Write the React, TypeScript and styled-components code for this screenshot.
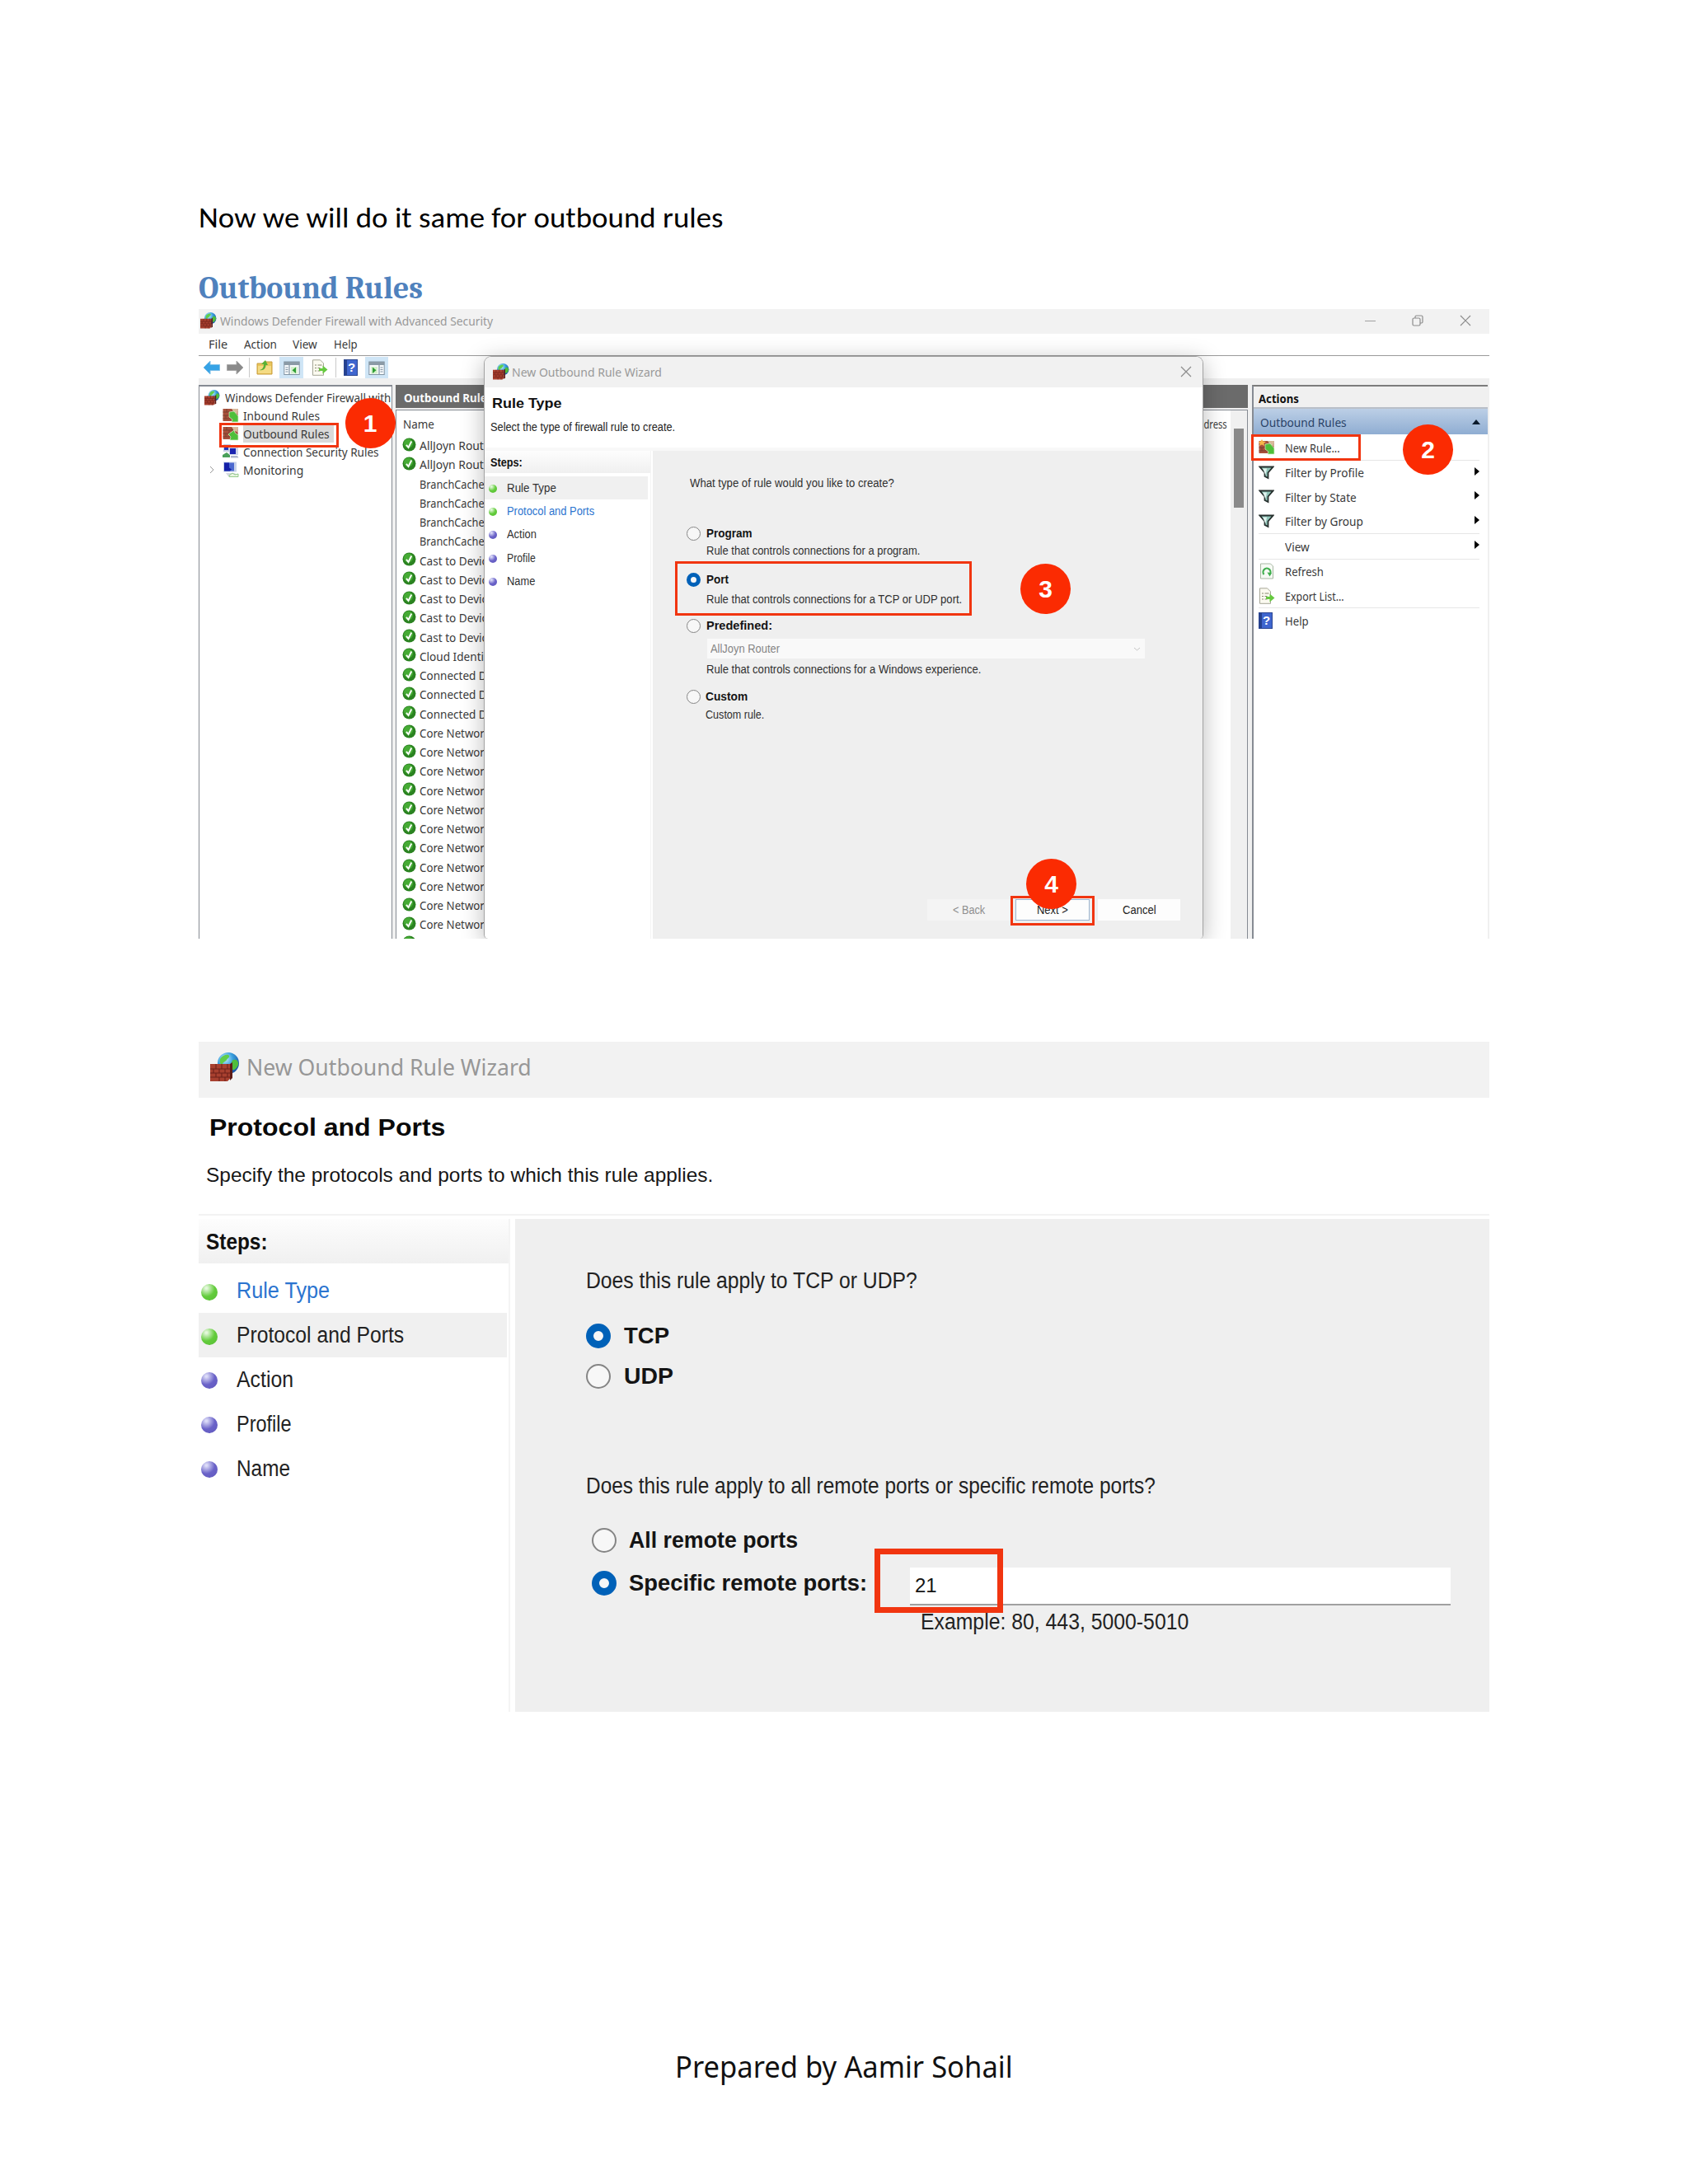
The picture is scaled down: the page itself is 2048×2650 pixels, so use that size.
import React, { useLayoutEffect, useRef, useState } from 'react';
import styled, { createGlobalStyle } from 'styled-components';

const segoe = `'Noto Sans', 'Open Sans', sans-serif`;
const arial = `'Liberation Sans', Arial, sans-serif`;

const GlobalStyle = createGlobalStyle`
  * {
    box-sizing: border-box;
  }
  body {
    margin: 0;
    background: #ffffff;
  }
`;

const Page = styled.main`
  width: 2048px;
  height: 2650px;
  padding: 245px 241px 0;
  background: #ffffff;
  display: flex;
  flex-direction: column;
`;

const Intro = styled.p`
  margin: 0 0 47px;
  height: 40px;
  line-height: 40px;
  font-family: Carlito, Lato, sans-serif;
  font-size: 34px;
  color: #000000;
`;

const Heading = styled.h2`
  margin: 0 0 6px;
  height: 37px;
  line-height: 37px;
  font-family: Caladea, Cambria, 'Liberation Serif', serif;
  font-size: 38px;
  font-weight: 700;
  color: #4f81bd;
`;

const Footer = styled.footer`
  margin-top: 405px;
  height: 50px;
  display: flex;
  align-items: center;
  justify-content: center;
  font-family: ${segoe};
  font-size: 36px;
  color: #111111;
`;

/* text that is squeezed or stretched to a known width */
const FitBox = styled.span<{ $width: number }>`
  display: block;
  flex: none;
  width: ${props => props.$width}px;
  white-space: nowrap;
`;

const FitInner = styled.span`
  display: inline-block;
  transform-origin: 0 50%;
`;

const Fit: React.FC<{ width: number; children: string }> = ({ width, children }) => {
  const ref = useRef<HTMLSpanElement>(null);
  const [scale, setScale] = useState(1);

  useLayoutEffect(() => {
    if (ref.current) {
      setScale(width / ref.current.offsetWidth);
    }
  }, [width, children]);

  return (
    <FitBox $width={width}>
      <FitInner ref={ref} style={{ transform: `scaleX(${scale})` }}>
        {children}
      </FitInner>
    </FitBox>
  );
};

/* ---------- icons ---------- */

const Icon = styled.svg<{ $size: number }>`
  display: block;
  flex: none;
  width: ${props => props.$size}px;
  height: ${props => props.$size}px;
`;

const FirewallIcon = ({ size }: { size: number }) => (
  <Icon $size={size} viewBox="0 0 36 36">
    <defs>
      <radialGradient id="globe" cx="0.35" cy="0.3" r="0.8">
        <stop offset="0" stopColor="#c9f1ff" />
        <stop offset="0.45" stopColor="#3aa0dd" />
        <stop offset="1" stopColor="#12479b" />
      </radialGradient>
    </defs>
    <circle cx="22" cy="13" r="13" fill="url(#globe)" />
    <path d="M12 8c4-6 10-6 11-4s-2 3-3 5-4 2-5 5-4-1-3-6z" fill="#5fce4a" />
    <path d="M28 9c3-1 5 0 6 3s-2 8-5 9-2-3-3-5 0-6 2-7z" fill="#4fbd3c" />
    <path d="M0 14h24v18l-3 3H0z" fill="#a8402f" />
    <path d="M24 14l3-2v19l-3 3z" fill="#5e1b16" />
    <path
      d="M0 20h24M0 25h24M0 30h24M7 14v6M14 14v6M21 14v6M4 20v5M11 20v5M18 20v5M7 25v5M14 25v5M21 25v5M11 30v5M18 30v5"
      stroke="#6d211a"
      strokeWidth="1.1"
      fill="none"
    />
  </Icon>
);

const RuleIcon = ({ size, flip, star }: { size: number; flip?: boolean; star?: boolean }) => (
  <Icon $size={size} viewBox="0 0 20 20">
    <rect x="0.5" y="2" width="18" height="15" fill="#a8503c" />
    <path d="M0.5 6h18M0.5 10h18M0.5 14h18M5 2v4M12 2v4M8 6v4M4 10v4M11 10v4" stroke="#74402c" strokeWidth="0.9" />
    <path d="M11 2h7.5v6L14 7z" fill="#d9b99a" />
    {flip ? (
      <path d="M19 18H9l1-4-3-3 7-5 1 3 4 3z" fill="#4fbf3a" stroke="#ddf2d0" strokeWidth="0.7" />
    ) : (
      <path d="M8 6l6-1 5 6v7h-8l1-3-4-3z" fill="#4fbf3a" stroke="#ddf2d0" strokeWidth="0.7" />
    )}
    {star && <path d="M4 0l1.5 2.5L9 3 6.5 5 7 8 4 6.5 1 8l.5-3L0 3l2.5-.5z" fill="#f7b64b" />}
  </Icon>
);

const SecurityIcon = ({ size }: { size: number }) => (
  <Icon $size={size} viewBox="0 0 20 20">
    <rect x="1" y="1" width="9" height="9" fill="#c5cde6" />
    <rect x="2" y="2" width="5" height="6" fill="#2336b8" />
    <path d="M0 14l5-3 4 3v3H0z" fill="#4aa05a" />
    <rect x="8" y="5" width="11" height="9" fill="#cdd4ea" />
    <rect x="9" y="6" width="7" height="7" fill="#1a23b0" />
    <path d="M10 15h8l1.5 2.5H10z" fill="#aeb6cc" />
  </Icon>
);

const MonitorIcon = ({ size }: { size: number }) => (
  <Icon $size={size} viewBox="0 0 20 20">
    <rect x="1" y="0.5" width="16" height="12" fill="#c8d2ea" />
    <rect x="2" y="1.5" width="12" height="10" fill="#4b68cf" />
    <path d="M2 1.5h6v6l3 2-2 2H2z" fill="#1420a8" />
    <path d="M4 14h11l3 4H7z" fill="#d3d8e0" />
    <path d="M8 17l4-3 3 2 4-1v3.5H8z" fill="#e8f5e0" stroke="#7dbf72" strokeWidth="0.8" />
  </Icon>
);

const CheckIcon = () => (
  <Icon $size={17} viewBox="0 0 17 17">
    <circle cx="8.5" cy="8.5" r="8" fill="#2b8321" />
    <circle cx="7.5" cy="7" r="5.500" fill="#46ab35" />
    <path d="M5 8.800l2.500 3.200 3.800-7.500" stroke="#ffffff" strokeWidth="1.900" fill="none" />
  </Icon>
);

const FunnelIcon = () => (
  <Icon $size={19} viewBox="0 0 19 19">
    <path d="M1.500 2.500h16l-6 7v6.500l-4-2V9.500z" fill="#8fc4b8" stroke="#26302e" strokeWidth="1.800" />
    <path d="M5 4.500h5l-1.500 8z" fill="#dff3ee" />
  </Icon>
);

const RefreshIcon = () => (
  <Icon $size={20} viewBox="0 0 20 20">
    <path d="M2.500 1h12l3 3v15h-15z" fill="#f6faf4" stroke="#a9b8a4" />
    <path d="M6.500 14a4.500 4.500 0 1 1 7 0" stroke="#3fae4d" strokeWidth="2.200" fill="none" />
    <path d="M10.500 11.500l5.500.5-2.500 4.500z" fill="#3fae4d" />
  </Icon>
);

const ExportIcon = () => (
  <Icon $size={20} viewBox="0 0 20 20">
    <path d="M1.500 0.800h9l4 4v14.500h-13z" fill="#fbfaf0" stroke="#a5a696" />
    <path d="M4 7h2M7.500 7h5M4 10.500h2M7.500 10.500h3M4 14h2M7.500 14h3" stroke="#87886f" strokeWidth="1.200" />
    <path d="M9 11h4.500V7.500l6 5-6 5V14H9z" fill="#66c93f" />
  </Icon>
);

const QuestionMark = styled.span`
  display: block;
  flex: none;
  width: 17px;
  height: 20px;
  background: linear-gradient(90deg, #25418f 0 3px, #3f66cf 3px);
  border: 1px solid #2a4591;
  color: #ffffff;
  font: 700 15px/18px ${arial};
  text-align: center;
  padding-left: 2px;
`;

const FolderUpIcon = () => (
  <Icon $size={20} viewBox="0 0 20 20">
    <path d="M1 5h7l1.500-2H19v15H1z" fill="#e9c65c" stroke="#c99c3a" />
    <path d="M2 8h16v9H2z" fill="#f4db84" />
    <path d="M4 13c4-1 5-4 5-7H6l5-5 3 6h-2.500c0 4-3 7-7.500 6z" fill="#58b135" />
  </Icon>
);

const PaneIcon = ({ flip }: { flip?: boolean }) => (
  <Icon $size={20} viewBox="0 0 20 20">
    <g transform={flip ? 'matrix(-1 0 0 1 20 0)' : undefined}>
      <rect x="0.8" y="3" width="18.4" height="15.500" fill="#f7fafc" stroke="#8294a3" />
      <rect x="0.8" y="3" width="18.4" height="4" fill="#8b9aa6" />
      <path d="M7 7v11M2.500 10h3M2.500 12.500h3M2.500 15h3" stroke="#8294a3" strokeWidth="1.200" />
      <rect x="9" y="9" width="8" height="8.500" fill="#d6f0cd" />
      <path d="M15 9.500l-4.500 3.800 4.500 3.800z" fill="#2f9e35" />
    </g>
  </Icon>
);

const ArrowIcon = ({ color, edge, flip }: { color: string; edge: string; flip?: boolean }) => (
  <Icon $size={20} viewBox="0 0 20 20">
    <path
      d={flip ? 'M20 10l-8-8v4.500H0.500v7H12V18z' : 'M0 10l8-8v4.500h11.500v7H8V18z'}
      fill={color}
      stroke={edge}
      strokeWidth="1"
    />
  </Icon>
);

const CloseIcon = () => (
  <Icon $size={14} viewBox="0 0 14 14">
    <path d="M1 1l12 12M13 1L1 13" stroke="#8c8c8c" strokeWidth="1.200" />
  </Icon>
);

/* ---------- annotations ---------- */

const Marker = styled.div<{ $x: number; $y: number }>`
  position: absolute;
  left: ${props => props.$x}px;
  top: ${props => props.$y}px;
  width: 61px;
  height: 61px;
  border-radius: 50%;
  background: #fb2b02;
  color: #ffffff;
  font: 700 30px/61px ${arial};
  text-align: center;
  z-index: 3;
`;

const Highlight = styled.div<{ $x: number; $y: number; $w: number; $h: number; $line?: number }>`
  position: absolute;
  left: ${props => props.$x}px;
  top: ${props => props.$y}px;
  width: ${props => props.$w}px;
  height: ${props => props.$h}px;
  border: ${props => props.$line ?? 3}px solid #f13510;
  z-index: 2;
`;

/* ---------- firewall console ---------- */

const Console = styled.section`
  position: relative;
  width: 1566px;
  height: 764px;
  overflow: hidden;
  flex: none;
  display: flex;
  flex-direction: column;
  background: #f0f0f0;
  font-family: ${segoe};
  font-size: 14.5px;
  color: #3a3a3a;
`;

const TitleBar = styled.div`
  height: 30px;
  flex: none;
  display: flex;
  align-items: center;
  gap: 4px;
  padding: 0 22px 2px 2px;
  background: #f2f2f2;
  color: #999999;
`;

const WindowControls = styled.div`
  margin-left: auto;
  display: flex;
  align-items: center;
  gap: 44px;
`;

const MenuBar = styled.div`
  height: 27px;
  flex: none;
  display: flex;
  align-items: center;
  gap: 19.5px;
  padding: 0 0 2px 12px;
  background: #ffffff;
  border-bottom: 1px solid #9a9a9a;
`;

const Toolbar = styled.div`
  height: 27px;
  flex: none;
  display: flex;
  align-items: center;
  padding: 1px 0 0 6px;
  background: #ffffff;
  margin-bottom: 8px;
`;

const ToolSlot = styled.div<{ $width: number; $active?: boolean }>`
  width: ${props => props.$width}px;
  height: 26px;
  display: flex;
  align-items: center;
  justify-content: center;
  background: ${props => (props.$active ? '#cfe5f6' : 'transparent')};
`;

const ToolDivider = styled.div`
  width: 1px;
  height: 24px;
  background: #c9c9c9;
`;

const Workspace = styled.div`
  flex: 1;
  min-height: 0;
  display: flex;
`;

const TreePane = styled.div`
  position: relative;
  width: 235px;
  margin-right: 4px;
  padding: 2px 0 0 6px;
  background: #ffffff;
  border: 1px solid #868b93;
  border-top-width: 2px;
  border-bottom: 0;
`;

const TreeRow = styled.div<{ $root?: boolean }>`
  height: 22px;
  display: flex;
  align-items: center;
  gap: ${props => (props.$root ? 6 : 5)}px;
  padding-left: ${props => (props.$root ? 0 : 22)}px;
  overflow: hidden;
`;

const TreeLabel = styled.span<{ $selected?: boolean }>`
  height: 21px;
  line-height: 20px;
  padding-right: 5px;
  background: ${props => (props.$selected ? '#d9d9d9' : 'transparent')};
`;

const Expander = styled.svg`
  width: 8px;
  height: 10px;
  margin: 0 4px 0 -17px;
`;

const ListPane = styled.div`
  width: 1034px;
  margin-right: 5px;
  display: flex;
  flex-direction: column;
`;

const ListTitle = styled.div`
  height: 28px;
  flex: none;
  padding: 2px 10px 0;
  display: flex;
  align-items: center;
  background: #6b6b6b;
  color: #ffffff;
  font-weight: 700;
  margin-bottom: 2px;
`;

const ListBody = styled.div`
  position: relative;
  flex: 1;
  min-height: 0;
  overflow: hidden;
  background: #ffffff;
  border: 1px solid #868b93;
  border-bottom: 0;
`;

const ListHead = styled.div`
  height: 30.5px;
  display: flex;
  align-items: center;
  justify-content: space-between;
  padding: 2px 24px 0 8px;
`;

const RuleRow = styled.div`
  height: 23.25px;
  display: flex;
  align-items: center;
  gap: 4px;
  padding-left: 7px;
`;

const RuleIconSlot = styled.span`
  width: 17px;
  padding-bottom: 2px;
`;

const ScrollTrack = styled.div`
  position: absolute;
  top: 0;
  right: 0;
  width: 20px;
  height: 100%;
  padding: 22px 4px 0;
  background: #f0f0f0;
`;

const ScrollThumb = styled.div`
  height: 96px;
  background: #8a8a8a;
`;

const ActionsPane = styled.div`
  position: relative;
  width: 286px;
  background: #ffffff;
  border-left: 2px solid #868b93;
  border-top: 2px solid #7c7c7c;
`;

const ActionsTitle = styled.div`
  height: 27px;
  padding: 4px 0 0 6px;
  background: #f0f0f0;
  border-bottom: 2px solid #b9bfc8;
  color: #111111;
  font-weight: 700;
  line-height: 20px;
`;

const ActionsGroup = styled.div`
  height: 31px;
  padding: 1px 9px 0 8px;
  display: flex;
  align-items: center;
  justify-content: space-between;
  background: linear-gradient(#bccfe6, #8fadd2);
  color: #2a4368;
`;

const ActionRow = styled.div<{ $height: number; $ruled?: boolean }>`
  height: ${props => props.$height}px;
  margin: 0 10px 0 6px;
  display: flex;
  align-items: center;
  border-bottom: 1px solid ${props => (props.$ruled ? '#e6e6e6' : 'transparent')};
`;

const ActionIconSlot = styled.span`
  width: 32px;
`;

const Submenu = styled.span`
  margin-left: auto;
  margin-bottom: 3px;
  border: solid transparent;
  border-width: 5.5px 0 5.5px 6px;
  border-left-color: #000000;
`;

const Collapse = styled.span`
  border: solid transparent;
  border-width: 0 5.5px 6px;
  border-bottom-color: #0b1a2c;
`;

/* ---------- wizard dialogs ---------- */

const Dialog = styled.div`
  position: absolute;
  left: 346px;
  top: 57px;
  width: 873px;
  height: 707px;
  display: flex;
  flex-direction: column;
  background: #ffffff;
  border: 1px solid #a2a2a2;
  border-bottom: 0;
  border-radius: 9px 9px 5px 5px;
  box-shadow: 0 6px 28px rgba(0, 0, 0, 0.28);
  overflow: hidden;
  font-family: ${arial};
  font-size: 14px;
  color: #303030;
`;

const DialogTitle = styled.div`
  height: 37px;
  flex: none;
  display: flex;
  align-items: center;
  gap: 3px;
  padding: 0 13px 2px 10px;
  background: #f1f1f1;
  color: #999999;
  font-family: ${segoe};
  font-size: 15px;

  svg:last-child {
    margin-left: auto;
  }
`;

const DialogHeader = styled.div`
  height: 77px;
  flex: none;
  padding: 9px 0 0 7px;
  line-height: 18px;
  color: #222222;
  border-bottom: 4px solid #f8f8f8;
`;

const DialogHeading = styled.div`
  padding-left: 2px;
  margin-bottom: 10px;
  font-size: 16.5px;
  font-weight: 700;
  line-height: 20px;
  color: #111111;
`;

const WizardBody = styled.div`
  flex: 1;
  min-height: 0;
  display: flex;
`;

const StepsPane = styled.div<{ $large?: boolean }>`
  width: ${props => (props.$large ? 378 : 202)}px;
  margin-right: ${props => (props.$large ? 6 : 2)}px;
  flex: none;
  border-right: ${props => (props.$large ? '2px' : '1px')} solid #f4f4f4;
`;

const StepsTitle = styled.div<{ $large?: boolean }>`
  height: ${props => (props.$large ? 54 : 27)}px;
  margin-bottom: ${props => (props.$large ? 6 : 4)}px;
  padding: ${props => (props.$large ? '2px 0 0 9px' : '1px 0 0 7px')};
  display: flex;
  align-items: center;
  background: linear-gradient(#fdfdfd, #f0f0f0);
  font-weight: 700;
  color: #111111;
`;

const StepRow = styled.div<{ $large?: boolean; $current?: boolean; $link?: boolean }>`
  height: ${props => (props.$large ? 53.8 : 28.2)}px;
  margin-right: ${props => (props.$large ? 2 : 3)}px;
  padding: ${props => (props.$large ? '2px 0 0 3px' : '0 0 0 5px')};
  display: flex;
  align-items: center;
  gap: ${props => (props.$large ? 22.5 : 11.5)}px;
  background: ${props => (props.$current ? '#f0f0f0' : 'transparent')};
  color: ${props => (props.$link ? '#2b74cf' : 'inherit')};
`;

const Bullet = styled.span<{ $large?: boolean; $done?: boolean }>`
  flex: none;
  width: ${props => (props.$large ? 20 : 10)}px;
  height: ${props => (props.$large ? 20 : 10)}px;
  margin-top: 2px;
  border-radius: 50%;
  background: ${props =>
    props.$done
      ? 'radial-gradient(circle at 32% 25%, #e4f8dc 5%, #63cc3c 50%, #57bd35)'
      : 'radial-gradient(circle at 32% 25%, #dcdcf8 5%, #6a62c8 50%, #5f58bd)'};
`;

const WizardMain = styled.div`
  position: relative;
  flex: 1;
  padding-left: 1px;
  display: flex;
  flex-direction: column;
  background: #efefef;
`;

const Line = styled.div<{ $top: number; $left: number; $height?: number }>`
  height: ${props => props.$height ?? 20}px;
  flex: none;
  margin: ${props => props.$top}px 0 0 ${props => props.$left}px;
  display: flex;
  align-items: center;
`;

const OptionLine = styled(Line)`
  font-weight: 700;
  color: #141414;
`;

const Radio = styled.span<{ $size: number; $gap: number; $checked?: boolean }>`
  flex: none;
  width: ${props => props.$size}px;
  height: ${props => props.$size}px;
  margin-right: ${props => props.$gap}px;
  border-radius: 50%;
  background: #f7f7f7;
  border: ${props => (props.$checked ? `${props.$size * 0.3}px solid #0061b8` : `${props.$size > 20 ? 2 : 1.5}px solid #858585`)};
`;

const Dropdown = styled.div`
  width: 531px;
  height: 24px;
  flex: none;
  margin: 6px 0 0 65px;
  padding: 0 5px 0 4px;
  display: flex;
  align-items: center;
  justify-content: space-between;
  background: #f9f9f9;
  color: #858585;
`;

const Buttons = styled.div`
  display: flex;
  margin: auto 0 22px 332px;
`;

const Button = styled.div<{ $width: number; $tone?: 'muted' | 'primary' }>`
  width: ${props => props.$width}px;
  height: 26px;
  margin-right: ${props => (props.$tone === 'primary' ? 10 : 7)}px;
  display: flex;
  align-items: center;
  justify-content: center;
  background: ${props => (props.$tone === 'muted' ? '#f4f4f4' : '#fdfdfd')};
  border: 1px solid ${props => (props.$tone === 'primary' ? '#9db4cf' : 'transparent')};
  color: ${props => (props.$tone === 'muted' ? '#8f8f8f' : '#222222')};
`;

const PortsWizard = styled.section`
  width: 1566px;
  height: 813px;
  margin-top: 125px;
  flex: none;
  display: flex;
  flex-direction: column;
  background: #ffffff;
  font-family: ${arial};
  font-size: 27px;
  color: #222222;
`;

const PortsTitle = styled.div`
  height: 68px;
  flex: none;
  display: flex;
  align-items: center;
  gap: 8px;
  padding: 0 0 7px 14px;
  background: #f2f2f2;
  color: #979797;
  font-family: ${segoe};
  font-size: 27px;
`;

const PortsHeader = styled.div`
  height: 143px;
  flex: none;
  margin-bottom: 4px;
  padding: 18px 0 0 9px;
  border-bottom: 2px solid #f2f2f2;
  font-size: 24px;
  line-height: 30px;
  color: #161616;
`;

const PortsHeading = styled.div`
  padding-left: 4px;
  margin-bottom: 25px;
  font-size: 30px;
  font-weight: 700;
  line-height: 36px;
  color: #0a0a0a;
`;

const PortInput = styled.div`
  width: 656px;
  height: 46px;
  margin: 7px 0 0 52px;
  padding-left: 6px;
  display: flex;
  align-items: center;
  background: #ffffff;
  border-bottom: 2px solid #a0a0a0;
  font-size: 24px;
  font-weight: 400;
`;

/* ---------- data ---------- */

const rules: { name: string; width: number; enabled: boolean; count: number }[] = [
  { name: 'AllJoyn Router', width: 91, enabled: true, count: 2 },
  { name: 'BranchCache', width: 79, enabled: false, count: 4 },
  { name: 'Cast to Device', width: 90, enabled: true, count: 5 },
  { name: 'Cloud Identity', width: 90, enabled: true, count: 1 },
  { name: 'Connected Dev', width: 96, enabled: true, count: 3 },
  { name: 'Core Network', width: 86, enabled: true, count: 12 },
];

const ruleRows = rules.flatMap(rule => Array.from({ length: rule.count }, () => rule));

interface Step {
  name: string;
  width: number;
  done?: boolean;
  current?: boolean;
  link?: boolean;
}

const typeSteps: Step[] = [
  { name: 'Rule Type', width: 60, done: true, current: true },
  { name: 'Protocol and Ports', width: 106, done: true, link: true },
  { name: 'Action', width: 36 },
  { name: 'Profile', width: 35 },
  { name: 'Name', width: 34 },
];

const portSteps: Step[] = [
  { name: 'Rule Type', width: 113, done: true, link: true },
  { name: 'Protocol and Ports', width: 203, done: true, current: true },
  { name: 'Action', width: 69 },
  { name: 'Profile', width: 67 },
  { name: 'Name', width: 65 },
];

const Steps: React.FC<{ steps: Step[]; large?: boolean }> = ({ steps, large }) => (
  <StepsPane $large={large}>
    <StepsTitle $large={large}>
      <Fit width={large ? 75 : 39}>Steps:</Fit>
    </StepsTitle>
    {steps.map(step => (
      <StepRow key={step.name} $large={large} $current={step.current} $link={step.link}>
        <Bullet $large={large} $done={step.done} />
        <Fit width={step.width}>{step.name}</Fit>
      </StepRow>
    ))}
  </StepsPane>
);

const RuleTypeDialog = () => (
  <Dialog>
    <DialogTitle>
      <FirewallIcon size={20} />
      <Fit width={182}>New Outbound Rule Wizard</Fit>
      <CloseIcon />
    </DialogTitle>
    <DialogHeader>
      <DialogHeading>
        <Fit width={85}>Rule Type</Fit>
      </DialogHeading>
      <Fit width={224}>Select the type of firewall rule to create.</Fit>
    </DialogHeader>
    <WizardBody>
      <Steps steps={typeSteps} />
      <WizardMain>
        <Line $top={29} $left={44}>
          <Fit width={248}>What type of rule would you like to create?</Fit>
        </Line>
        <OptionLine $top={41} $left={40}>
          <Radio $size={17} $gap={7} />
          <Fit width={56}>Program</Fit>
        </OptionLine>
        <Line $top={1} $left={64}>
          <Fit width={259}>Rule that controls connections for a program.</Fit>
        </Line>
        <OptionLine $top={15} $left={40}>
          <Radio $size={17} $gap={7} $checked />
          <Fit width={27}>Port</Fit>
        </OptionLine>
        <Line $top={4} $left={64}>
          <Fit width={310}>Rule that controls connections for a TCP or UDP port.</Fit>
        </Line>
        <OptionLine $top={12} $left={40}>
          <Radio $size={17} $gap={7} />
          <Fit width={80}>Predefined:</Fit>
        </OptionLine>
        <Dropdown>
          <Fit width={84}>AllJoyn Router</Fit>
          <Icon $size={9} viewBox="0 0 9 9">
            <path d="M1 3l3.500 3L8 3" stroke="#c4c4c4" fill="none" />
          </Icon>
        </Dropdown>
        <Line $top={3} $left={64}>
          <Fit width={333}>Rule that controls connections for a Windows experience.</Fit>
        </Line>
        <OptionLine $top={13} $left={40}>
          <Radio $size={17} $gap={6} />
          <Fit width={51}>Custom</Fit>
        </OptionLine>
        <Line $top={2} $left={63}>
          <Fit width={71}>Custom rule.</Fit>
        </Line>
        <Buttons>
          <Button $width={100} $tone="muted">
            <Fit width={39}>{'< Back'}</Fit>
          </Button>
          <Button $width={90} $tone="primary">
            <Fit width={38}>{'Next >'}</Fit>
          </Button>
          <Button $width={100}>
            <Fit width={41}>Cancel</Fit>
          </Button>
        </Buttons>
        <Highlight $x={27} $y={134} $w={360} $h={66} />
        <Marker $x={446} $y={137}>3</Marker>
        <Highlight $x={434} $y={540} $w={102} $h={36} />
        <Marker $x={453} $y={495}>4</Marker>
      </WizardMain>
    </WizardBody>
  </Dialog>
);

const FirewallConsole = () => (
  <Console>
    <TitleBar>
      <FirewallIcon size={20} />
      <Fit width={331}>Windows Defender Firewall with Advanced Security</Fit>
      <WindowControls>
        <Icon $size={13} viewBox="0 0 13 13">
          <path d="M0 6.500h13" stroke="#a0a0a0" />
        </Icon>
        <Icon $size={14} viewBox="0 0 14 14">
          <rect x="1" y="4" width="9" height="9" rx="1.500" fill="none" stroke="#8c8c8c" strokeWidth="1.200" />
          <path d="M4 4V2.500Q4 1 5.500 1h6Q13 1 13 2.500v6Q13 10 11.500 10H10" fill="none" stroke="#8c8c8c" strokeWidth="1.200" />
        </Icon>
        <CloseIcon />
      </WindowControls>
    </TitleBar>
    <MenuBar>
      <Fit width={23}>File</Fit>
      <Fit width={40}>Action</Fit>
      <Fit width={30}>View</Fit>
      <Fit width={29}>Help</Fit>
    </MenuBar>
    <Toolbar>
      <ToolSlot $width={20}>
        <ArrowIcon color="#36a3e6" edge="#7dbfe8" />
      </ToolSlot>
      <ToolSlot $width={35}>
        <ArrowIcon color="#8a8a8a" edge="#a9a9a9" flip />
      </ToolSlot>
      <ToolDivider />
      <ToolSlot $width={36}>
        <FolderUpIcon />
      </ToolSlot>
      <ToolSlot $width={29} $active>
        <PaneIcon />
      </ToolSlot>
      <ToolSlot $width={39}>
        <ExportIcon />
      </ToolSlot>
      <ToolDivider />
      <ToolSlot $width={35}>
        <QuestionMark>?</QuestionMark>
      </ToolSlot>
      <ToolSlot $width={28} $active>
        <PaneIcon flip />
      </ToolSlot>
    </Toolbar>
    <Workspace>
      <TreePane>
        <TreeRow $root>
          <FirewallIcon size={19} />
          <Fit width={201}>Windows Defender Firewall with</Fit>
        </TreeRow>
        <TreeRow>
          <RuleIcon size={20} />
          <TreeLabel>
            <Fit width={93}>Inbound Rules</Fit>
          </TreeLabel>
        </TreeRow>
        <TreeRow>
          <RuleIcon size={20} flip />
          <TreeLabel $selected>
            <Fit width={105}>Outbound Rules</Fit>
          </TreeLabel>
        </TreeRow>
        <TreeRow>
          <SecurityIcon size={20} />
          <TreeLabel>
            <Fit width={165}>Connection Security Rules</Fit>
          </TreeLabel>
        </TreeRow>
        <TreeRow>
          <Expander viewBox="0 0 8 10">
            <path d="M2 1l4 4-4 4" stroke="#9a9a9a" fill="none" />
          </Expander>
          <MonitorIcon size={20} />
          <TreeLabel>
            <Fit width={73}>Monitoring</Fit>
          </TreeLabel>
        </TreeRow>
        <Highlight $x={24} $y={44} $w={145} $h={30} />
      </TreePane>
      <ListPane>
        <ListTitle>
          <Fit width={107}>Outbound Rules</Fit>
        </ListTitle>
        <ListBody>
          <ListHead>
            <Fit width={38}>Name</Fit>
            <Fit width={86}>Remote Address</Fit>
          </ListHead>
          {ruleRows.map((rule, index) => (
            <RuleRow key={index}>
              <RuleIconSlot>{rule.enabled && <CheckIcon />}</RuleIconSlot>
              <Fit width={rule.width}>{rule.name}</Fit>
            </RuleRow>
          ))}
          <ScrollTrack>
            <ScrollThumb />
          </ScrollTrack>
        </ListBody>
      </ListPane>
      <ActionsPane>
        <ActionsTitle>
          <Fit width={49}>Actions</Fit>
        </ActionsTitle>
        <ActionsGroup>
          <Fit width={105}>Outbound Rules</Fit>
          <Collapse />
        </ActionsGroup>
        <ActionRow $height={32} $ruled>
          <ActionIconSlot>
            <RuleIcon size={20} star />
          </ActionIconSlot>
          <Fit width={67}>New Rule...</Fit>
        </ActionRow>
        <ActionRow $height={29.5}>
          <ActionIconSlot>
            <FunnelIcon />
          </ActionIconSlot>
          <Fit width={96}>Filter by Profile</Fit>
          <Submenu />
        </ActionRow>
        <ActionRow $height={29.5}>
          <ActionIconSlot>
            <FunnelIcon />
          </ActionIconSlot>
          <Fit width={87}>Filter by State</Fit>
          <Submenu />
        </ActionRow>
        <ActionRow $height={29.5} $ruled>
          <ActionIconSlot>
            <FunnelIcon />
          </ActionIconSlot>
          <Fit width={95}>Filter by Group</Fit>
          <Submenu />
        </ActionRow>
        <ActionRow $height={31} $ruled>
          <ActionIconSlot />
          <Fit width={30}>View</Fit>
          <Submenu />
        </ActionRow>
        <ActionRow $height={29.5}>
          <ActionIconSlot>
            <RefreshIcon />
          </ActionIconSlot>
          <Fit width={47}>Refresh</Fit>
        </ActionRow>
        <ActionRow $height={30} $ruled>
          <ActionIconSlot>
            <ExportIcon />
          </ActionIconSlot>
          <Fit width={72}>Export List...</Fit>
        </ActionRow>
        <ActionRow $height={30}>
          <ActionIconSlot>
            <QuestionMark>?</QuestionMark>
          </ActionIconSlot>
          <Fit width={29}>Help</Fit>
        </ActionRow>
        <Highlight $x={-3} $y={58} $w={133} $h={32} />
        <Marker $x={181} $y={46}>2</Marker>
      </ActionsPane>
    </Workspace>
    <Marker $x={177.5} $y={107.5}>1</Marker>
    <RuleTypeDialog />
  </Console>
);

const ProtocolAndPorts = () => (
  <PortsWizard>
    <PortsTitle>
      <FirewallIcon size={36} />
      <Fit width={346}>New Outbound Rule Wizard</Fit>
    </PortsTitle>
    <PortsHeader>
      <PortsHeading>
        <Fit width={286}>Protocol and Ports</Fit>
      </PortsHeading>
      <Fit width={615}>Specify the protocols and ports to which this rule applies.</Fit>
    </PortsHeader>
    <WizardBody>
      <Steps steps={portSteps} large />
      <WizardMain>
        <Line $top={60} $left={85} $height={30}>
          <Fit width={402}>Does this rule apply to TCP or UDP?</Fit>
        </Line>
        <OptionLine $top={37} $left={85} $height={30}>
          <Radio $size={30} $gap={16} $checked />
          <Fit width={55}>TCP</Fit>
        </OptionLine>
        <OptionLine $top={19} $left={85} $height={30}>
          <Radio $size={30} $gap={16} />
          <Fit width={60}>UDP</Fit>
        </OptionLine>
        <Line $top={103} $left={85} $height={30}>
          <Fit width={691}>Does this rule apply to all remote ports or specific remote ports?</Fit>
        </Line>
        <OptionLine $top={36} $left={92} $height={30}>
          <Radio $size={30} $gap={15} />
          <Fit width={205}>All remote ports</Fit>
        </OptionLine>
        <OptionLine $top={14} $left={92} $height={46}>
          <Radio $size={30} $gap={15} $checked />
          <Fit width={289}>Specific remote ports:</Fit>
          <PortInput>
            <Fit width={27}>21</Fit>
          </PortInput>
        </OptionLine>
        <Line $top={9} $left={491} $height={30}>
          <Fit width={325}>Example: 80, 443, 5000-5010</Fit>
        </Line>
        <Highlight $x={436} $y={400} $w={156} $h={78} $line={7} />
      </WizardMain>
    </WizardBody>
  </PortsWizard>
);

const App: React.FC = () => {
  return (
    <>
      <GlobalStyle />
      <Page>
        <Intro>
          <Fit width={637}>Now we will do it same for outbound rules</Fit>
        </Intro>
        <Heading>
          <Fit width={272}>Outbound Rules</Fit>
        </Heading>
        <FirewallConsole />
        <ProtocolAndPorts />
        <Footer>
          <Fit width={410}>Prepared by Aamir Sohail</Fit>
        </Footer>
      </Page>
    </>
  );
};

export default App;
